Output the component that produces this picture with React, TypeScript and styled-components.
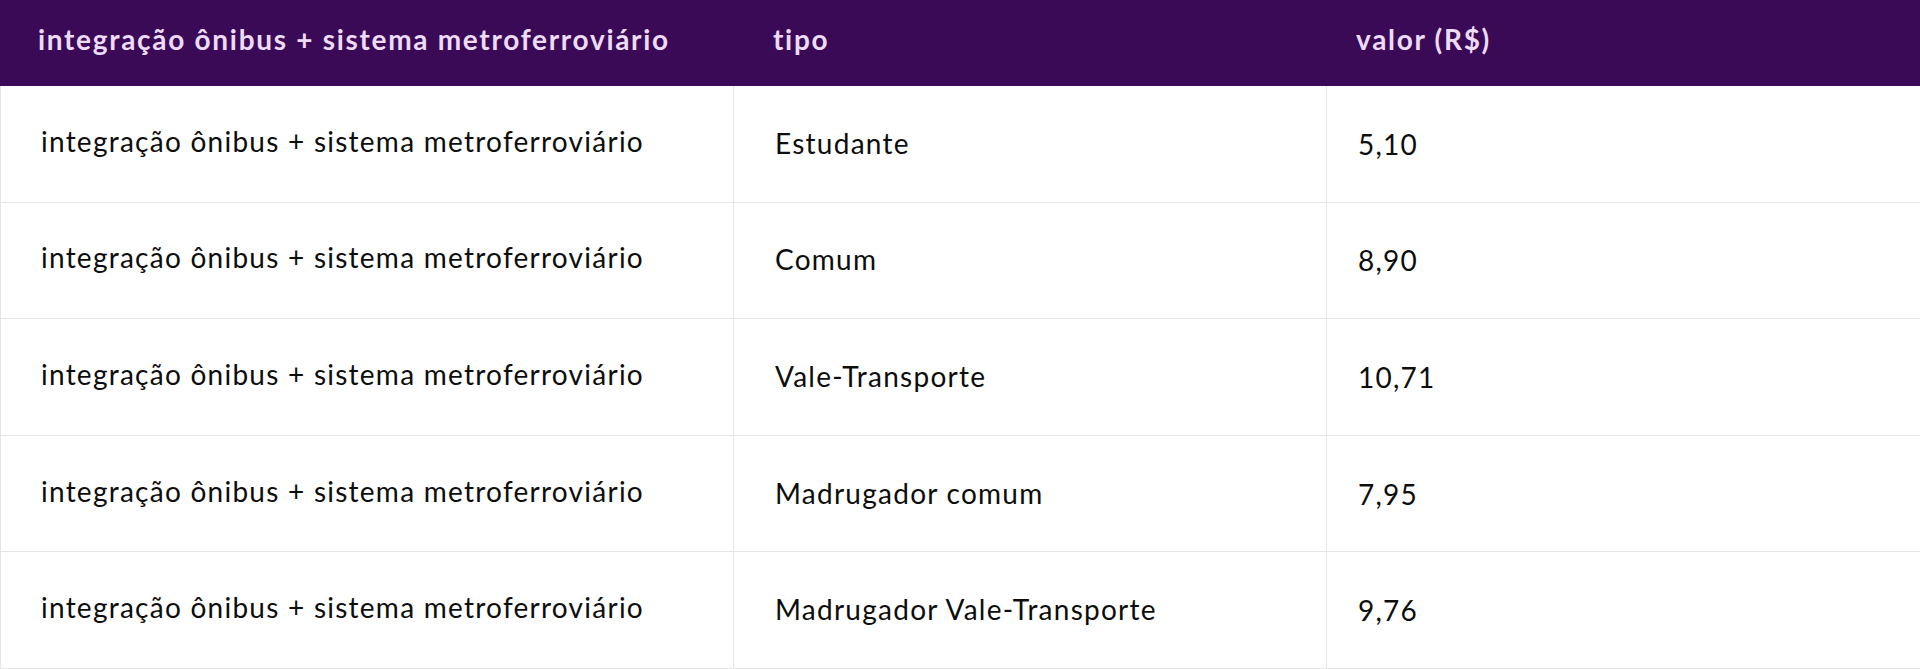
import React from "react";
import styled, { createGlobalStyle } from "styled-components";

const headerBg = "#3b0a57";
const headerText = "#eddcf8";
const lineColor = "#e6e6e6";

const GlobalStyle = createGlobalStyle`
  html, body {
    margin: 0;
    padding: 0;
    background: #ffffff;
  }
  body {
    font-family: Lato, "Noto Sans", sans-serif;
    color: #0d0d0d;
  }
`;

const Table = styled.div`
  display: grid;
  grid-template-columns: 733px 593px 1fr;
  width: 1920px;
`;

const HeadCell = styled.div<{ $pad: number }>`
  display: flex;
  align-items: center;
  height: 86px;
  box-sizing: border-box;
  padding: 0 0 8px ${(p) => p.$pad}px;
  background: ${headerBg};
  color: ${headerText};
  font-size: 28px;
  font-weight: 700;
  letter-spacing: 1.7px;
`;

// $lift moves the text up (positive) or down (negative) from the centre
const Cell = styled.div<{ $pad: number; $lift: number }>`
  display: flex;
  align-items: center;
  height: 116.6px;
  box-sizing: border-box;
  padding-left: ${(p) => p.$pad}px;
  padding-bottom: ${(p) => Math.max(p.$lift, 0) * 2}px;
  padding-top: ${(p) => Math.max(-p.$lift, 0) * 2}px;
  border-bottom: 1px solid ${lineColor};
  border-left: 1px solid ${lineColor};
  font-size: 28px;
  letter-spacing: 1.25px;
`;

const columns = [
  { title: "integração ônibus + sistema metroferroviário", head: 38, pad: 40, lift: 3 },
  { title: "tipo", head: 40, pad: 41, lift: 1 },
  { title: "valor (R$)", head: 30, pad: 31, lift: 0 },
];

const rows = [
  ["Estudante", "5,10"],
  ["Comum", "8,90"],
  ["Vale-Transporte", "10,71"],
  ["Madrugador comum", "7,95"],
  ["Madrugador Vale-Transporte", "9,76"],
];

export default function App() {
  return (
    <>
      <GlobalStyle />
      <Table>
        {columns.map((c) => (
          <HeadCell key={c.title} $pad={c.head}>
            {c.title}
          </HeadCell>
        ))}
        {rows.map(([tipo, valor]) => (
          <React.Fragment key={tipo}>
            <Cell $pad={columns[0].pad} $lift={columns[0].lift}>
              integração ônibus + sistema metroferroviário
            </Cell>
            <Cell $pad={columns[1].pad} $lift={columns[1].lift}>
              {tipo}
            </Cell>
            <Cell $pad={columns[2].pad} $lift={columns[2].lift}>
              {valor}
            </Cell>
          </React.Fragment>
        ))}
      </Table>
    </>
  );
}
